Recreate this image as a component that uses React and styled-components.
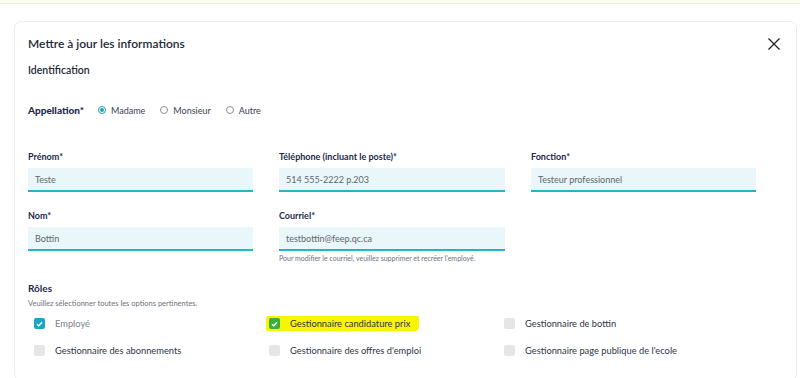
import React from 'react'
import styled, { createGlobalStyle } from 'styled-components'

const Global = createGlobalStyle`
  body {
    margin: 0;
    background: #ffffff;
    font-family: Lato, "Open Sans", sans-serif;
  }
`

const TopBand = styled.div`
  height: 3px;
  background: #fafbea;
  border-bottom: 1px solid #f0f0df;
`

const Card = styled.div`
  margin: 17px 3px 0 14px;
  border: 1px solid #ececec;
  border-radius: 7px;
  padding: 14px 0 20px 13px;
  position: relative;
  height: 360px;
  box-sizing: border-box;
`

const Title = styled.h2`
  margin: 0;
  font-size: 12px;
  line-height: 16px;
  font-weight: 600;
  color: #1f2937;
`

const Close = styled.button`
  position: absolute;
  top: 15px;
  right: 15px;
  width: 14px;
  height: 14px;
  border: 0;
  padding: 0;
  background: none;
  color: #222;
`

const Section = styled.h3`
  margin: 11px 0 0;
  font-size: 10.5px;
  line-height: 14px;
  font-weight: 600;
  color: #1f2937;
`

const RadioRow = styled.div`
  display: flex;
  align-items: center;
  margin-top: 26px;
  height: 14px;
`

const RowLabel = styled.span`
  font-size: 10px;
  font-weight: 900;
  color: #1c2a4a;
  margin-right: 14px;
`

const RadioOption = styled.label`
  display: flex;
  align-items: center;
  font-size: 9px;
  color: #3a4356;
  margin-right: 15px;
`

const RadioDot = styled.span`
  width: 6px;
  height: 6px;
  border-radius: 50%;
  border: 1px solid ${p => (p.checked ? '#1aa3b0' : '#8a8f98')};
  margin-right: 5px;
  box-sizing: content-box;
  display: flex;
  align-items: center;
  justify-content: center;
  &::after {
    content: '';
    width: 4px;
    height: 4px;
    border-radius: 50%;
    background: ${p => (p.checked ? '#1aa3b0' : 'transparent')};
  }
`

const FieldGrid = styled.div`
  display: grid;
  grid-template-columns: 225px 226px 225px;
  column-gap: 26px;
  row-gap: 18px;
  margin-top: 34px;
`

const Field = styled.div`
  display: flex;
  flex-direction: column;
`

const Label = styled.label`
  font-size: 9px;
  line-height: 12px;
  font-weight: 700;
  color: #1c2a4a;
  margin-bottom: 5px;
`

const Input = styled.div`
  height: 22px;
  background: #e9f6fa;
  border-bottom: 2px solid #25b3c9;
  font-size: 9px;
  color: #5f6670;
  display: flex;
  align-items: center;
  padding-left: 7px;
`

const Help = styled.div`
  font-size: 7px;
  color: #6b7280;
  margin-top: 3px;
  line-height: 9px;
`

const Roles = styled.h3`
  margin: 18px 0 0;
  font-size: 10px;
  line-height: 14px;
  font-weight: 700;
  color: #1c2a4a;
`

const SubText = styled.div`
  font-size: 7.5px;
  color: #6b7280;
  margin-top: 4px;
  line-height: 10px;
`

const CheckGrid = styled.div`
  display: grid;
  grid-template-columns: 235px 235px 235px;
  grid-auto-rows: 27px;
  margin-top: 1px;
  padding-left: 6px;
`

const CheckItem = styled.div`
  display: flex;
  align-items: center;
  font-size: 9.3px;
  color: ${p => (p.muted ? '#7b828c' : '#2d3648')};
`

const Highlight = styled.span`
  display: inline-flex;
  align-items: center;
  background: #f7f500;
  margin-left: -3px;
  padding: 2px 9px 2px 3px;
  border-radius: 3px 1px 4px 2px;
`

const Box = styled.span`
  width: 11px;
  height: 11px;
  border-radius: 2px;
  background: ${p => p.bg};
  margin-right: 10px;
  display: flex;
  align-items: center;
  justify-content: center;
  flex-shrink: 0;
`

function Check({ color }) {
  return (
    <svg width="7" height="6" viewBox="0 0 7 6">
      <path d="M1 3.2 L2.8 4.8 L6 1.2" fill="none" stroke={color} strokeWidth="1.3" />
    </svg>
  )
}

function Checkbox({ checked, bg }) {
  return <Box bg={bg}>{checked && <Check color="#fff" />}</Box>
}

export default function App() {
  return (
    <>
      <Global />
      <TopBand />
      <Card>
        <Close aria-label="Fermer">
          <svg width="14" height="14" viewBox="0 0 14 14">
            <path d="M1.5 1.5 L12.5 12.5 M12.5 1.5 L1.5 12.5" stroke="#222" strokeWidth="1.3" />
          </svg>
        </Close>
        <Title>Mettre à jour les informations</Title>
        <Section>Identification</Section>

        <RadioRow>
          <RowLabel>Appellation*</RowLabel>
          <RadioOption><RadioDot checked />Madame</RadioOption>
          <RadioOption><RadioDot />Monsieur</RadioOption>
          <RadioOption><RadioDot />Autre</RadioOption>
        </RadioRow>

        <FieldGrid>
          <Field>
            <Label>Prénom*</Label>
            <Input>Teste</Input>
          </Field>
          <Field>
            <Label>Téléphone (incluant le poste)*</Label>
            <Input>514 555-2222 p.203</Input>
          </Field>
          <Field>
            <Label>Fonction*</Label>
            <Input>Testeur professionnel</Input>
          </Field>
          <Field>
            <Label>Nom*</Label>
            <Input>Bottin</Input>
          </Field>
          <Field>
            <Label>Courriel*</Label>
            <Input>testbottin@feep.qc.ca</Input>
            <Help>Pour modifier le courriel, veuillez supprimer et recréer l'employé.</Help>
          </Field>
        </FieldGrid>

        <Roles>Rôles</Roles>
        <SubText>Veuillez sélectionner toutes les options pertinentes.</SubText>

        <CheckGrid>
          <CheckItem muted><Checkbox checked bg="#1ba6c2" />Employé</CheckItem>
          <CheckItem>
            <Highlight><Checkbox checked bg="#3caf3a" />Gestionnaire candidature prix</Highlight>
          </CheckItem>
          <CheckItem><Checkbox bg="#e6e6e6" />Gestionnaire de bottin</CheckItem>
          <CheckItem><Checkbox bg="#e6e6e6" />Gestionnaire des abonnements</CheckItem>
          <CheckItem><Checkbox bg="#e6e6e6" />Gestionnaire des offres d'emploi</CheckItem>
          <CheckItem><Checkbox bg="#e6e6e6" />Gestionnaire page publique de l'ecole</CheckItem>
        </CheckGrid>
      </Card>
    </>
  )
}
